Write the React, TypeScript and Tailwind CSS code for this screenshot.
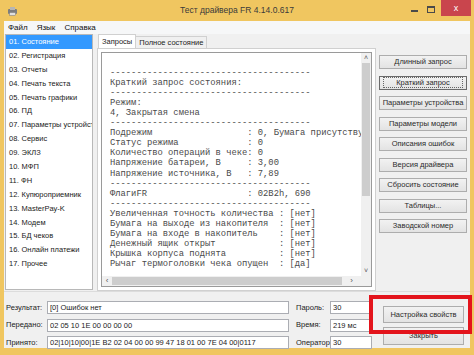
import React from 'react';

const PAGES = [
  '01. Состояние',
  '02. Регистрация',
  '03. Отчеты',
  '04. Печать текста',
  '05. Печать графики',
  '06. ПД',
  '07. Параметры устройства',
  '08. Сервис',
  '09. ЭКЛЗ',
  '10. МФП',
  '11. ФН',
  '12. Купюроприемник',
  '13. MasterPay-K',
  '14. Модем',
  '15. БД чеков',
  '16. Онлайн платежи',
  '17. Прочее',
];

const ACTIONS = [
  'Длинный запрос',
  'Краткий запрос',
  'Параметры устройства',
  'Параметры модели',
  'Описания ошибок',
  'Версия драйвера',
  'Сбросить состояние',
  'Таблицы...',
  'Заводской номер',
];

const DASH = '--------------------------------------';

const LINES = [
  '',
  DASH,
  'Краткий запрос состояния:',
  DASH,
  'Режим:',
  '4, Закрытая смена',
  DASH,
  'Подрежим                  : 0, Бумага присутствует',
  'Статус режима             : 0',
  'Количество операций в чеке: 0',
  'Напряжение батареи, В     : 3,00',
  'Напряжение источника, В   : 7,89',
  DASH,
  'ФлагиFR                   : 02B2h, 690',
  DASH,
  'Увеличенная точность количества : [нет]',
  'Бумага на выходе из накопителя  : [нет]',
  'Бумага на входе в накопитель    : [нет]',
  'Денежный ящик открыт            : [нет]',
  'Крышка корпуса поднята          : [нет]',
  'Рычаг термоголовки чека опущен  : [да]',
];

const WinButton: React.FC<{ label: string; focused?: boolean; className?: string }> = ({ label, focused, className }) => (
  <div
    className={`flex items-center justify-center border ${focused ? 'border-[#6b6b6b]' : 'border-[#adadad]'} bg-gradient-to-b from-[#f2f2f2] to-[#e3e3e3] text-[7.5px] text-[#2a2a2a] whitespace-nowrap overflow-hidden ${className ?? ''}`}
  >
    {focused ? (
      <span className="border border-dotted border-[#666] px-[12px] leading-[9px]">{label}</span>
    ) : (
      label
    )}
  </div>
);

const Field: React.FC<{ value: string; className?: string }> = ({ value, className }) => (
  <div className={`h-[13px] border border-[#abadb3] bg-white pl-[2px] text-[7.5px] leading-[11px] text-[#222] whitespace-nowrap overflow-hidden ${className ?? ''}`}>
    {value}
  </div>
);

export default function App() {
  return (
    <div className="relative w-[474px] h-[355px] overflow-hidden bg-[#f0c660] flex flex-col font-['Liberation_Sans',Arial,sans-serif]">
      {/* Title bar */}
      <div className="relative h-[21px] flex items-center shrink-0">
        <svg className="ml-[7px]" width="11" height="10" viewBox="0 0 11 10">
          <rect x="1" y="3" width="9" height="5" rx="1" fill="#7d7d7d" />
          <rect x="3" y="1" width="5" height="3" fill="#b5b5b5" />
          <rect x="2.5" y="6.5" width="6" height="3" fill="#e0e0e0" stroke="#777" strokeWidth="0.5" />
        </svg>
        {/* window caption is centred across the whole frame */}
        <div className="absolute left-0 right-0 top-[4px] text-center text-[8.5px] text-[#3a3a3a] pointer-events-none">
          Тест драйвера FR 4.14.0.617
        </div>
        <div className="flex-1" />
        <div className="flex items-start self-start h-[17px]">
          <div className="w-[7px] mt-[10px] mr-[9px] h-[2px] bg-[#4a4a4a]" />
          <div className="w-[8px] h-[7px] mt-[6px] mr-[6px] border border-[#4a4a4a] border-t-2" />
          <div className="w-[30px] h-[16px] mr-[3px] bg-[#c9454d] flex items-center justify-center text-white text-[9px] leading-none">
            x
          </div>
        </div>
      </div>

      {/* Window client */}
      <div className="flex-1 mx-[4px] mb-[7px] bg-[#f0f0f0] flex flex-col min-h-0">
        {/* Menu */}
        <div className="h-[13px] shrink-0 bg-[#f6f7f8] flex items-center gap-[9px] pl-[4px] text-[8px] text-[#111]">
          <span>Файл</span>
          <span>Язык</span>
          <span>Справка</span>
        </div>

        {/* Main area */}
        <div className="h-[257px] shrink-0 flex">
          {/* Page list */}
          <div className="ml-[1px] w-[88px] h-[256px] bg-white border border-[#b8b8b8] overflow-hidden">
            {PAGES.map((p, i) => (
              <div
                key={p}
                className={`h-[13.9px] pl-[3px] text-[7.5px] leading-[13.9px] whitespace-nowrap ${i === 0 ? 'bg-[#3399ff] text-white' : 'text-[#222]'}`}
              >
                {p}
              </div>
            ))}
          </div>

          {/* Tabs */}
          <div className="ml-[4px] w-[279px] flex flex-col">
            <div className="h-[14px] flex items-end pl-[1px] text-[7.5px] text-[#222]">
              <div className="h-[14px] px-[3px] bg-white border border-b-0 border-[#d0d0d0] flex items-center">Запросы</div>
              <div className="h-[12px] px-[3px] bg-[#f0f0f0] border border-l-0 border-b-0 border-[#d0d0d0] flex items-center">Полное состояние</div>
            </div>
            <div className="flex-1 bg-white border border-[#d0d0d0] p-[3px]">
              <div className="h-full border border-[#9a9a9a] flex flex-col">
                <div className="flex-1 flex min-h-0">
                  <div className="flex-1 overflow-hidden pl-[8px] pt-[5px] font-['Liberation_Mono','Courier_New',monospace] text-[8.8px] leading-[10.05px] text-[#4a4a4a] whitespace-pre">
                    {LINES.map((l, i) => (
                      <div key={i} className="h-[10.05px]">{l}</div>
                    ))}
                  </div>
                  {/* vertical scrollbar */}
                  <div className="w-[10px] bg-[#f0f0f0] flex flex-col items-center">
                    <div className="h-[10px] text-[7px] leading-[10px] text-[#555]">˄</div>
                    <div className="w-[8px] h-[133px] bg-[#cdcdcd]" />
                    <div className="flex-1" />
                    <div className="h-[10px] text-[7px] leading-[10px] text-[#555]">˅</div>
                  </div>
                </div>
                {/* horizontal scrollbar */}
                <div className="h-[10px] shrink-0 flex bg-[#f0f0f0]">
                  <div className="w-[10px] text-[8px] leading-[10px] text-center text-[#555]">‹</div>
                  <div className="w-[230px] h-[8px] mt-[1px] bg-[#cdcdcd]" />
                  <div className="flex-1 text-[8px] leading-[10px] text-center text-[#555]">›</div>
                  <div className="w-[10px]" />
                </div>
              </div>
            </div>
          </div>

          {/* Buttons */}
          <div className="ml-[3px] w-[88px] flex flex-col gap-[6.5px] pt-[21px]">
            {ACTIONS.map((a, i) => (
              <WinButton key={a} label={a} focused={i === 1} className="h-[14px]" />
            ))}
          </div>
        </div>

        {/* Status panel */}
        <div className="flex-1 flex pt-[9px] border-t border-[#dcdcdc]">
          <div className="flex flex-col gap-[4.5px] w-[289px]">
            {[
              ['Результат:', '[0] Ошибок нет'],
              ['Передано:', '02 05 10 1E 00 00 00 00'],
              ['Принято:', '02|10|10|00|1E B2 02 04 00 00 99 47 18 01 00 7E 04 00|0117'],
            ].map(([k, v]) => (
              <div key={k} className="flex items-center">
                <span className="w-[43px] pl-[2px] text-[7.5px] text-[#222]">{k}</span>
                <Field value={v} className="w-[242px]" />
              </div>
            ))}
          </div>
          <div className="flex flex-col gap-[4.5px] ml-[3px]">
            {[
              ['Пароль:', '30'],
              ['Время:', '219 мс'],
              ['Оператор:', '30'],
            ].map(([k, v]) => (
              <div key={k} className="flex items-center">
                <span className="w-[34px] text-[7.5px] text-[#222]">{k}</span>
                <Field value={v} className="w-[42px]" />
              </div>
            ))}
          </div>
          <div className="ml-[11px] w-[81px] flex flex-col gap-[4px] pt-[5px]">
            <WinButton label="Настройка свойств" className="h-[17px]" />
            <WinButton label="Закрыть" className="h-[18px]" />
          </div>
        </div>
      </div>

      {/* Red highlight overlay */}
      <div className="absolute left-[369px] top-[295px] w-[103px] h-[39px] border-[4px] border-[#e3141c]" />
    </div>
  );
}
